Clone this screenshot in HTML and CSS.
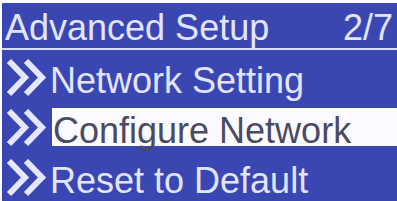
FILE: index.html
```html
<!DOCTYPE html>
<html>
<head>
<meta charset="utf-8">
<link rel="stylesheet" href="styles.css">
</head>
<body>
<div class="screen">
  <div class="header">
    <span class="title">Advanced Setup</span>
    <span class="page">2/7</span>
  </div>
  <div class="row">
    <svg class="chev" width="44" height="38" viewBox="0 0 44 38"><polyline points="4,2 20,18.5 4,35"/><polyline points="21,2 37,18.5 21,35"/></svg>
    <span class="label">Network Setting</span>
  </div>
  <div class="row">
    <svg class="chev" width="44" height="38" viewBox="0 0 44 38"><polyline points="4,2 20,18.5 4,35"/><polyline points="21,2 37,18.5 21,35"/></svg>
    <span class="label selected">Configure Network</span>
  </div>
  <div class="row">
    <svg class="chev" width="44" height="38" viewBox="0 0 44 38"><polyline points="4,2 20,18.5 4,35"/><polyline points="21,2 37,18.5 21,35"/></svg>
    <span class="label">Reset to Default</span>
  </div>
</div>
</body>
</html>
```
FILE: styles.css
```css
html, body {
  margin: 0;
  padding: 0;
  background: #ffffff;
  overflow: hidden;
}
.screen {
  margin: 3px 0 0 2px;
  width: 395px;
  height: 198px;
  background: #3a47b2;
  color: #e2e5ff;
  font-family: "Liberation Sans", Arial, sans-serif;
  font-size: 36px;
  overflow: hidden;
}
.header {
  display: flex;
  justify-content: space-between;
  padding: 4px 4px 0 3px;
  line-height: 41px;
  height: 41px;
  border-bottom: 2px solid #d9ddff;
}
.row {
  display: flex;
  align-items: flex-start;
  height: 50px;
}
.header + .row {
  margin-top: 6px;
}
.chev {
  margin: 3px 0 0 3px;
  flex: none;
}
.chev polyline {
  fill: none;
  stroke: #e4e7ff;
  stroke-width: 6;
  stroke-linejoin: miter;
}
.label {
  margin: 2px 0 0 1px;
  height: 41px;
  line-height: 45px;
  white-space: nowrap;
}
.label.selected {
  flex: 1;
  margin-left: 3px;
  padding-left: 1px;
  height: 38px;
  background: #fbfbff;
  color: #4a4b63;
}
```
